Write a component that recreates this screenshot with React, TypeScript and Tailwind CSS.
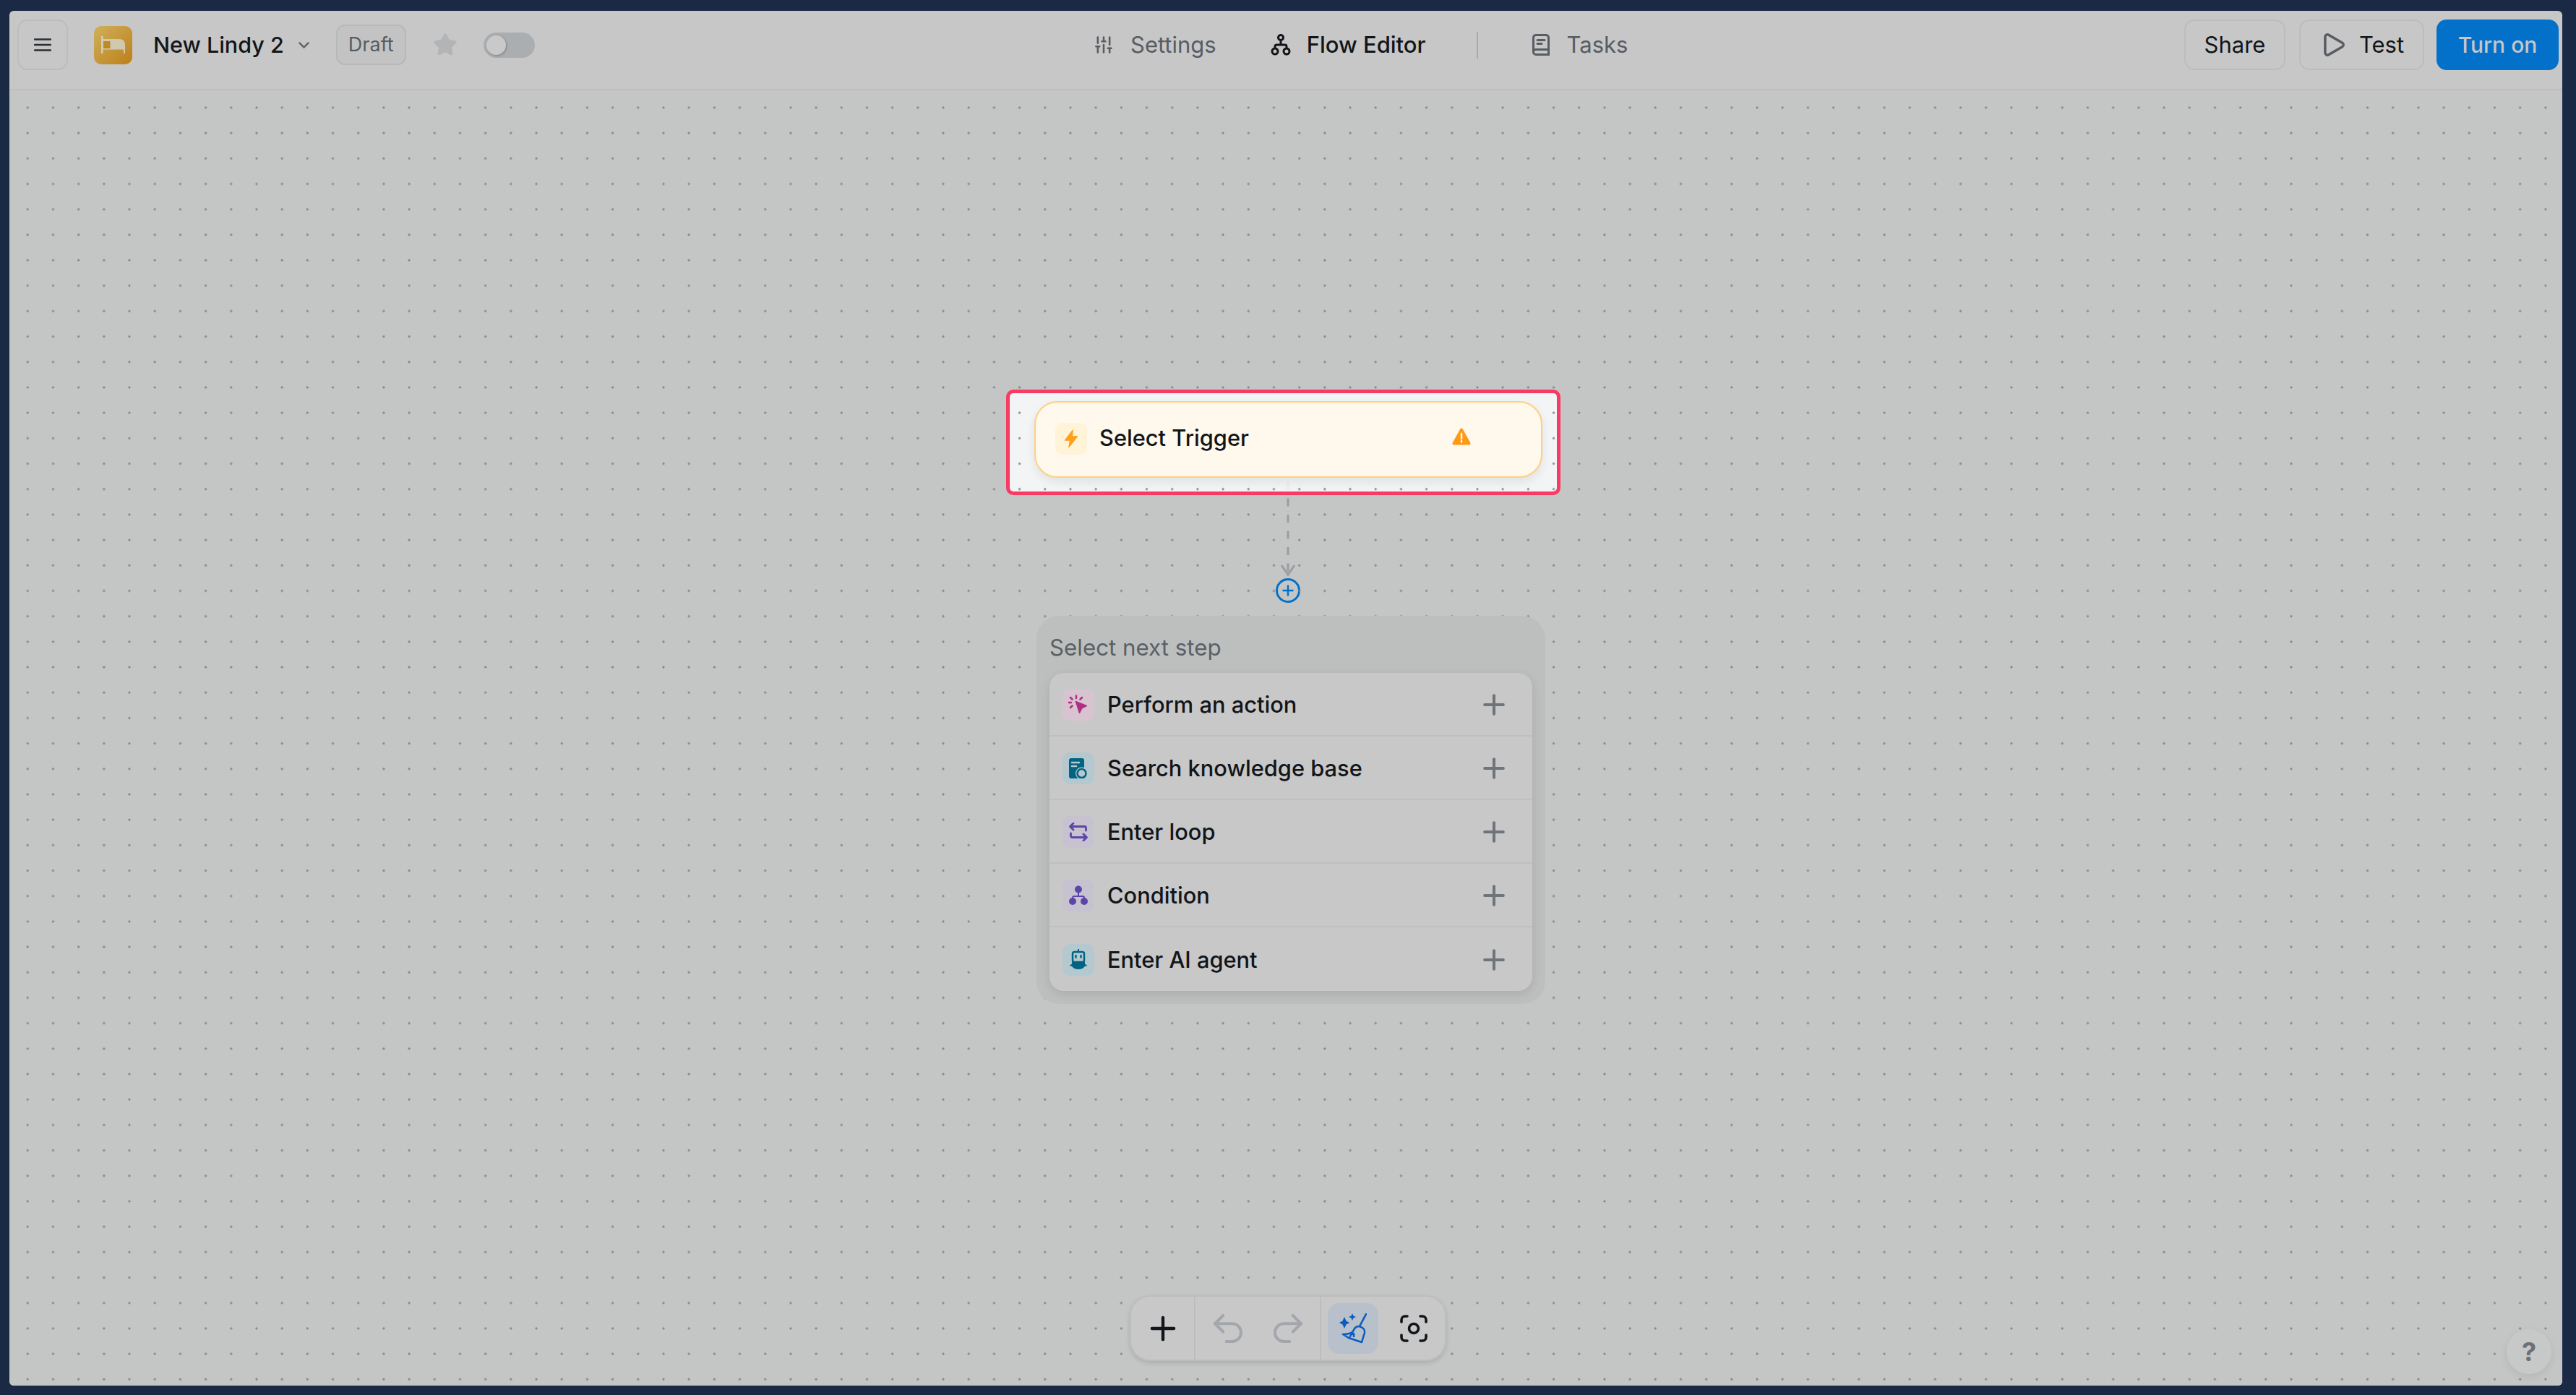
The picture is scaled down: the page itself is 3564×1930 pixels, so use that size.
import { Play, Plus, Redo2, SlidersVertical, Star, Undo2 } from "lucide-react";
import type { ReactNode } from "react";

const steps = [
  { label: "Perform an action", box: "bg-[#d7c4d0]", icon: <CursorIcon /> },
  { label: "Search knowledge base", box: "bg-[#b4c9cf]", icon: <KnowledgeIcon /> },
  { label: "Enter loop", box: "bg-[#c6c2d0]", icon: <LoopIcon /> },
  { label: "Condition", box: "bg-[#c6c2d0]", icon: <ConditionIcon /> },
  { label: "Enter AI agent", box: "bg-[#b4c9cf]", icon: <AgentIcon /> },
];

function BedIcon() {
  return (
    <svg width="53" height="53" viewBox="0 0 53 53">
      <path d="M10 14h2.500v24H10z" fill="#d2cdb4" />
      <path d="M12 18h23c5 0 8 3 8 8v12h-2v-5.500H12z" fill="#d0c9ae" />
      <path d="M13 21h9.500v10H13z" fill="#bd8a28" />
    </svg>
  );
}

function FlowIcon() {
  return (
    <svg width="28" height="30" viewBox="0 0 28 30" fill="none" stroke="#121519" strokeWidth="3">
      <circle cx="14" cy="5" r="3.500" />
      <circle cx="6" cy="24" r="4" />
      <circle cx="22" cy="24" r="4" />
      <path d="M14 9v6M6 20v-2.500c0-1.500 1-2.500 2.500-2.500h11c1.500 0 2.500 1 2.500 2.500V20" />
    </svg>
  );
}

function TasksIcon() {
  return (
    <svg width="24" height="30" viewBox="0 0 24 30" fill="none" stroke="#585c63" strokeWidth="3" strokeLinecap="round">
      <path d="M5 1.500h14a3.500 3.500 0 0 1 3.500 3.500v23.500H5A3.500 3.500 0 0 1 1.500 25V5A3.500 3.500 0 0 1 5 1.500Z" />
      <path d="M1.500 24a3.500 3.500 0 0 1 3.500-2.500h17.500M7 8.500h10M7 13.500h6" />
    </svg>
  );
}

function BoltIcon() {
  return (
    <svg width="20" height="26" viewBox="0 0 18 24">
      <path d="M11 1 1 14h6.500L6 23l11-14h-6.500Z" fill="#ff9f1c" stroke="#ff9f1c" strokeLinejoin="round" />
    </svg>
  );
}

function WarnIcon() {
  return (
    <svg width="26" height="24" viewBox="0 0 26 24">
      <path d="M13 2.500 2.500 21.500h21Z" fill="#ff9914" stroke="#ff9914" strokeWidth="4" strokeLinejoin="round" />
      <path d="M13 8v7M13 18v1.500" stroke="#fff8ec" strokeWidth="2.500" strokeLinecap="round" />
    </svg>
  );
}

function CursorIcon() {
  return (
    <svg width="28" height="28" viewBox="0 0 28 28" fill="none">
      <path d="M10 9 26 15.500 19 19 15.500 26Z" fill="#b12d86" stroke="#b12d86" strokeLinejoin="round" />
      <path
        d="M11 1.500v3.500M3 4l2.500 2.500M19 4l-2.500 2.500M0.500 11h3.500M3 18l2.500-2.500"
        stroke="#b12d86"
        strokeWidth="2.500"
        strokeLinecap="round"
      />
    </svg>
  );
}

function KnowledgeIcon() {
  return (
    <svg width="26" height="28" viewBox="0 0 26 28" fill="none">
      <path d="M3 0h15a3 3 0 0 1 3 3v25H3a3 3 0 0 1-3-3V3a3 3 0 0 1 3-3Z" fill="#036382" />
      <path d="M4 6h10M4 11h6" stroke="#b4c9cf" strokeWidth="2.500" strokeLinecap="round" />
      <circle cx="17.500" cy="21" r="8.500" fill="#b4c9cf" />
      <circle cx="17.500" cy="21" r="6" stroke="#036382" strokeWidth="2.500" />
    </svg>
  );
}

function LoopIcon() {
  return (
    <svg width="26" height="26" viewBox="0 0 26 26" fill="none" stroke="#5b46a8" strokeWidth="2.800" strokeLinecap="round" strokeLinejoin="round">
      <path d="M6 1 1.500 5.500 6 10M2 5.500h19.500a2 2 0 0 1 2 2V11" />
      <path d="M20 16l4.500 4.500L20 25M24 20.500H4.500a2 2 0 0 1-2-2V15" />
    </svg>
  );
}

function ConditionIcon() {
  return (
    <svg width="26" height="28" viewBox="0 0 26 28" fill="none">
      <circle cx="13" cy="5.500" r="5" fill="#5b46a8" />
      <circle cx="5" cy="22" r="5" fill="#5b46a8" />
      <circle cx="21" cy="22" r="5" fill="#5b46a8" />
      <path d="M13 9v6M5 20v-3c0-1.200.8-2 2-2h12c1.200 0 2 .8 2 2v3" stroke="#5b46a8" strokeWidth="2" />
    </svg>
  );
}

function AgentIcon() {
  return (
    <svg width="26" height="30" viewBox="0 0 26 30" fill="none">
      <path d="M13 0v4" stroke="#036382" strokeWidth="2" />
      <rect x="5" y="4" width="16" height="14" rx="2.500" stroke="#036382" strokeWidth="2.500" />
      <path d="M9.500 9v2.500M16.500 9v2.500" stroke="#036382" strokeWidth="2.500" strokeLinecap="round" />
      <path d="M4 17.500h18v3l3.500 2.500-3.500.8c-1.500 2.800-5 4.200-9 4.200s-7.500-1.400-9-4.200l-3.500-.8L4 20.500Z" fill="#036382" />
    </svg>
  );
}

function BroomIcon() {
  return (
    <svg width="38" height="42" viewBox="0 0 38 42" fill="none" stroke="#0b5cbd" strokeWidth="2.600" strokeLinecap="round" strokeLinejoin="round">
      <path d="M37 1 28 18" />
      <path d="M22 20c3-3 7-2 10 0 3 2 4 6 2 10l-3 10-18-6-8-5c5 0 10-1 13-3 2-2 2-4 4-6Z" />
      <path d="M15 32c1-3 3-4 5-4v4" />
      <path d="M7 5l2.500 5.500L14 13l-4.500 2.500L7 21l-2.500-5.500L0 13l4.500-2.500Z" fill="#0b5cbd" stroke="none" />
      <path d="M18 0l1.500 3.500L23 5l-3.500 1.500L18 10l-1.500-3.500L13 5l3.500-1.500Z" fill="#0b5cbd" stroke="none" />
    </svg>
  );
}

function FocusIcon() {
  return (
    <svg width="38" height="38" viewBox="0 0 38 38" fill="none" stroke="#121519" strokeWidth="3.600" strokeLinecap="round">
      <path d="M2 10V7a5 5 0 0 1 5-5h3M28 2h3a5 5 0 0 1 5 5v3M36 28v3a5 5 0 0 1-5 5h-3M10 36H7a5 5 0 0 1-5-5v-3" />
      <circle cx="19" cy="19" r="6.500" />
    </svg>
  );
}

function HeaderButton({ children, width }: { children: ReactNode; width: string }) {
  return (
    <button className={`flex h-[70px] items-center justify-center rounded-[14px] border-2 border-[#bcbcbc] text-[31px] text-[#121519] ${width}`}>
      {children}
    </button>
  );
}

export default function App() {
  return (
    <div className="flex h-[1930px] w-[3564px] flex-col bg-[#1b2a44] pb-[13px] pl-[13px] pr-[19px] pt-[15px] font-['Inter',sans-serif]">
      <div className="flex flex-1 flex-col overflow-hidden rounded-[6px] bg-[#c7c7c7]">
        <header className="flex h-[110px] shrink-0 items-center border-b-2 border-[#bcbebd] pb-[14px]">
          <div className="flex w-[1500px] shrink-0 items-center pl-[11px]">
            <button className="flex h-[70px] w-[70px] items-center justify-center rounded-[14px] border-2 border-[#bcbcbc]">
              <svg width="24" height="20" viewBox="0 0 24 20" stroke="#2b2e33" strokeWidth="2.500" strokeLinecap="round">
                <path d="M1 2.500h22M1 10h22M1 17.500h22" />
              </svg>
            </button>
            <div className="ml-[36px] flex h-[53px] w-[53px] items-center justify-center rounded-[10px] bg-gradient-to-br from-[#cfb05a] to-[#bd7f0f]">
              <BedIcon />
            </div>
            <span className="ml-[29px] text-[30.500px] font-medium text-[#121519]">New Lindy 2</span>
            <svg className="ml-[20px]" width="15" height="9" viewBox="0 0 15 9" fill="none" stroke="#65696f" strokeWidth="2.500" strokeLinecap="round" strokeLinejoin="round">
              <path d="M1.500 1.500 7.500 7.500l6-6" />
            </svg>
            <span className="ml-[37px] flex h-[56px] w-[97px] items-center justify-center rounded-[12px] border-2 border-[#b6b8ba] bg-[#c3c3c3] text-[27px] text-[#585c63]">
              Draft
            </span>
            <Star className="ml-[37px]" size={34} fill="#b2b4b6" stroke="#b2b4b6" />
            <div className="ml-[36px] flex h-[35px] w-[71px] items-center rounded-full bg-[#abaeb1] pl-[4px]">
              <div className="h-[27px] w-[27px] rounded-full bg-[#c9c9c9] shadow-[1px_1px_3px_rgba(0,0,0,0.25)]" />
            </div>
          </div>

          <nav className="flex items-center text-[31px]">
            <SlidersVertical size={28} stroke="#585c63" strokeWidth={2.2} />
            <span className="ml-[23px] text-[#585c63]">Settings</span>
            <span className="ml-[75px]">
              <FlowIcon />
            </span>
            <span className="ml-[22px] font-medium text-[#121519]">Flow Editor</span>
            <div className="ml-[70px] h-[37px] w-[2px] bg-[#a8aaac]" />
            <span className="ml-[75px]">
              <TasksIcon />
            </span>
            <span className="ml-[24px] text-[#585c63]">Tasks</span>
          </nav>

          <div className="ml-auto flex items-center pr-[5px]">
            <HeaderButton width="w-[140px]">Share</HeaderButton>
            <div className="ml-[19px]">
              <HeaderButton width="w-[173px] gap-[17px]">
                <Play size={38} stroke="#585c63" strokeWidth={2.2} />
                Test
              </HeaderButton>
            </div>
            <button className="ml-[17px] h-[70px] w-[169px] rounded-[14px] bg-[#0371c9] text-[30px] font-medium text-[#c7c7c7]">
              Turn on
            </button>
          </div>
        </header>

        <main className="relative flex-1 overflow-hidden bg-[#c4c6c5]">
          {/* connector sits under the selection box so its top part looks washed out */}
          <svg className="absolute left-[1749px] top-[535px]" width="40" height="176" viewBox="0 0 40 176" fill="none">
            <path d="M20 7v126" stroke="#9a9ca3" strokeWidth="3" strokeDasharray="11 11.500" />
            <path d="M11 122l9 13 9-13" stroke="#9a9ca3" strokeWidth="3" />
            <circle cx="20" cy="157" r="15.500" stroke="#0371c9" strokeWidth="3" />
            <path d="M20 149.500v15M12.500 157h15" stroke="#0371c9" strokeWidth="2.500" />
          </svg>

          <div className="absolute left-[1379px] top-[414px] h-[146px] w-[767px] rounded-[10px] border-[5px] border-[#f93a63] bg-[#fbfcfd]/85" />

          <div className="absolute inset-0 bg-[radial-gradient(circle,#84868b_1.2px,transparent_1.9px)] [background-position:7.7px_6.3px] [background-size:35.2px_35.2px]" />

          <div className="absolute left-[1418px] top-[430px] flex h-[106px] w-[703px] items-center rounded-[32px] border-2 border-[#fdd083] bg-[#fff8ec] pb-[3px] pl-[27px] pr-[97px] shadow-[0_6px_14px_rgba(0,0,0,0.08)]">
            <div className="flex h-[44px] w-[44px] items-center justify-center rounded-[10px] bg-[#fff3d8]">
              <BoltIcon />
            </div>
            <span className="ml-[17px] text-[30.800px] font-medium text-[#121519]">Select Trigger</span>
            <span className="mb-[5px] ml-auto">
              <WarnIcon />
            </span>
          </div>

          <div className="absolute left-[1421px] top-[727px] w-[704px] rounded-[32px] bg-[#bdbfbe] px-[18px] pb-[18px]">
            <div className="flex h-[79px] items-center pt-[10px] text-[31.300px] text-[#5b5f66]">Select next step</div>
            <div className="rounded-[20px] bg-[#c8c8c8] shadow-[0_4px_14px_rgba(0,0,0,0.1)]">
              {steps.map((step, idx) => (
                <div
                  key={step.label}
                  className={`flex h-[88px] items-center pl-[18px] pr-[31px] pt-[2px] ${idx < steps.length - 1 ? "border-b-2 border-[#bdbfc0]" : ""}`}
                >
                  <div className={`flex h-[44px] w-[44px] items-center justify-center rounded-[10px] ${step.box}`}>
                    {step.icon}
                  </div>
                  <span className="ml-[18px] text-[30.800px] font-medium text-[#121519]">{step.label}</span>
                  <Plus className="ml-auto" size={44} stroke="#6f747a" strokeWidth={2.2} />
                </div>
              ))}
            </div>
          </div>

          <div className="absolute left-[1550px] top-[1667px] flex h-[91px] w-[438px] items-stretch rounded-[28px] border-2 border-[#bdbdbd] bg-[#c8c8c8] shadow-[0_3px_6px_rgba(0,0,0,0.12)]">
            <div className="flex w-[89px] items-center justify-center border-r-2 border-[#bdbdbd]">
              <Plus size={52} stroke="#121519" strokeWidth={2} />
            </div>
            <div className="flex w-[174px] items-center justify-center gap-[29px] border-r-2 border-[#bdbdbd]">
              <Undo2 size={54} stroke="#a3a7ab" strokeWidth={1.8} />
              <Redo2 size={54} stroke="#a3a7ab" strokeWidth={1.8} />
            </div>
            <div className="flex items-center pl-[9px]">
              <div className="flex h-[70px] w-[70px] items-center justify-center rounded-[16px] bg-[#b7c0cb]">
                <BroomIcon />
              </div>
              <span className="ml-[30px]">
                <FocusIcon />
              </span>
            </div>
          </div>

          <button className="absolute bottom-[16px] right-[15px] flex h-[62px] w-[62px] items-center justify-center rounded-full bg-[#c7c9c9] text-[36px] font-bold text-[#6d7076] shadow-[0_4px_12px_rgba(0,0,0,0.08)]">
            ?
          </button>
        </main>
      </div>
    </div>
  );
}
